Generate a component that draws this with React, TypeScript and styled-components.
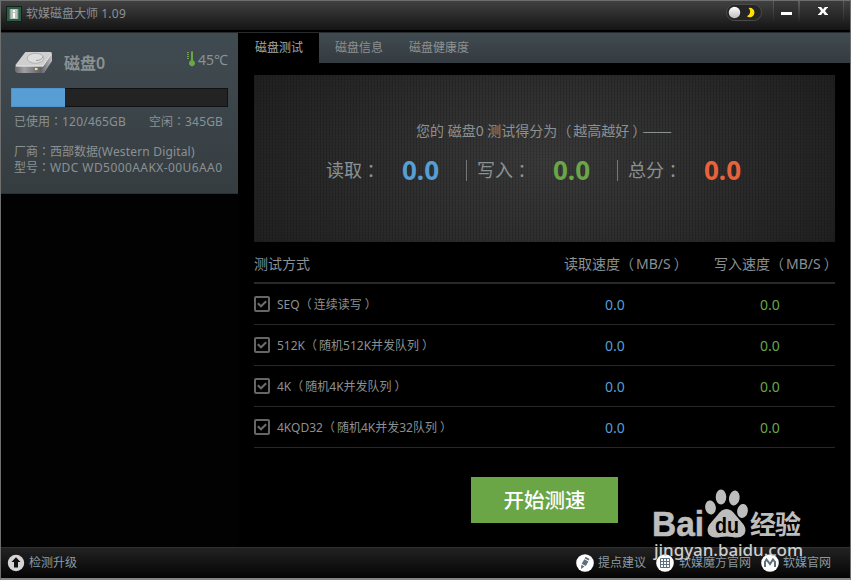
import React from "react";
import styled, { createGlobalStyle } from "styled-components";

const Global = createGlobalStyle`
  * { box-sizing: border-box; }
  body { margin: 0; background: #000; font-family: "Noto Sans", "Noto Sans CJK SC", sans-serif; }
`;

const Window = styled.div`
  width: 851px;
  height: 580px;
  display: flex;
  flex-direction: column;
  position: relative;
  overflow: hidden;
  background: #000;
  border: 1px solid #6e6e6e;
  border-bottom: 2px solid #858585;
  color: #8b9193;
  font-size: 12px;
  line-height: 16px;
  white-space: nowrap;
`;

/* Full-width colon, centred in its cell */
const ColonGlyph = styled.span`
  font-family: "Noto Sans CJK JP", sans-serif;
`;
const Colon = () => <ColonGlyph>：</ColonGlyph>;

/* Full-width brackets, pulled towards the centre of their cells */
const Bracket = styled.span<{ $open: boolean }>`
  margin: ${(p) => (p.$open ? "0 2px 0 0" : "0 -3px 0 3px")};
`;
const Bracketed = ({ text }: { text: string }) => (
  <span>
    {text.split(/([（）])/).map((part, i) =>
      part === "（" || part === "）" ? (
        <Bracket key={i} $open={part === "（"}>{part}</Bracket>
      ) : (
        part
      )
    )}
  </span>
);

const TitleBar = styled.header`
  height: 32px;
  flex: none;
  display: flex;
  align-items: flex-start;
  background: linear-gradient(#414141, #141414 29px, #000 29px, #000 31px, #272b2d 31px);
`;
const AppIcon = styled.svg`
  margin: 5px 0 0 5px;
  flex: none;
`;
const AppTitle = styled.h1`
  margin: 4px 0 0 4px;
  flex: 1;
  font-size: 12px;
  font-weight: 400;
  line-height: 18px;
`;
const ThemeToggle = styled.div`
  width: 36px;
  height: 17px;
  margin: 3px 11px 0 0;
  border: 1px solid #4b4b4b;
  border-radius: 9px;
  background: #242424;
  svg { display: block; }
`;
const WindowButton = styled.button<{ $w: number }>`
  width: ${(p) => p.$w}px;
  height: 20px;
  padding: 0;
  border: 1px solid;
  border-width: 0 1px;
  border-image: linear-gradient(#636363, #252525) 1;
  background: linear-gradient(#3b3b3b, #222);
  svg { display: block; }
`;

const Body = styled.div`
  flex: 1;
  min-height: 0;
  display: flex;
`;
const Sidebar = styled.aside`
  width: 237px;
  flex: none;
  background: #020202;
`;
const DiskCard = styled.section`
  height: 161px;
  padding: 15px 10px 0;
  background: linear-gradient(#404b51, #363d41);
  border-bottom: 1px solid #2b3033;
`;
const DiskHead = styled.div`
  height: 40px;
  display: flex;
`;
const DriveIcon = styled.svg`
  margin: 3px 0 0 4px;
`;
const DiskName = styled.h2`
  margin: 3px 0 0 12px;
  flex: 1;
  font-size: 16px;
  font-weight: 600;
  line-height: 24px;
`;
const Temperature = styled.div`
  display: flex;
  gap: 3px;
  font-size: 14px;
  line-height: 24px;
  svg { margin-top: 3px; }
`;
const Usage = styled.div`
  height: 19px;
  border: 1px solid #101112;
  background: #232323;
`;
const UsageFill = styled.div`
  width: 54px;
  height: 19px;
  margin: -1px 0 0 -1px;
  background: #589dd4;
  border: 1px solid #4e94cb;
  border-right: 0;
`;
const UsageText = styled.div`
  display: flex;
  justify-content: space-between;
  margin: 6px 5px 13px 3px;
`;
const DiskInfo = styled.div`
  margin-left: 3px;
  & + & { margin-top: -1px; }
`;
const Spaced = styled.span<{ $s: number }>`
  letter-spacing: ${(p) => p.$s}px;
`;

const Main = styled.main`
  flex: 1;
  display: flex;
  flex-direction: column;
`;
const Tabs = styled.nav`
  height: 30px;
  display: flex;
  background: linear-gradient(#404b51, #343b40);
`;
const Tab = styled.div<{ $active?: boolean }>`
  padding: 0 ${(p) => (p.$active ? "16px 0 17px" : "13px")};
  margin-right: ${(p) => (p.$active ? 3 : 0)}px;
  line-height: 30px;
  background: ${(p) => (p.$active ? "#000" : "transparent")};
  color: ${(p) => (p.$active ? "#a3aaad" : "#8b9193")};
`;
const Content = styled.div`
  padding: 12px 14px 0 16px;
`;
const ScorePanel = styled.section`
  height: 167px;
  width: 581px;
  padding-top: 46px;
  background:
    repeating-linear-gradient(90deg, rgba(0, 0, 0, 0.15) 0 1px, transparent 1px 3px),
    repeating-linear-gradient(0deg, rgba(0, 0, 0, 0.05) 0 1px, transparent 1px 3px),
    radial-gradient(ellipse 330px 170px at 50% 52%, #3a3a3a, #202020);
`;
const ScoreTitle = styled.div`
  height: 20px;
  margin-left: 162px;
  font-size: 14px;
  line-height: 20px;
`;
const Dash = styled.span`
  font-family: "Liberation Sans", sans-serif;
  line-height: 0;
`;
const Scores = styled.div`
  display: grid;
  grid-template-columns: 141px 151px 130px;
  margin: 14px 0 0 72px;
`;
const Score = styled.div`
  display: flex;
  align-items: center;
  height: 30px;
  font-size: 18px;
`;
const ScoreValue = styled.strong<{ $color: string }>`
  margin-left: 22px;
  color: ${(p) => p.$color};
  font-size: 26px;
  line-height: 30px;
  font-weight: 700;
`;
const Divider = styled.i`
  width: 1px;
  height: 21px;
  margin-right: 10px;
  margin-left: -1px;
  background: #777;
`;

const Row = styled.div<{ $head?: boolean }>`
  width: 581px;
  height: ${(p) => (p.$head ? 42 : 41)}px;
  padding-top: ${(p) => (p.$head ? 4 : 1)}px;
  display: grid;
  grid-template-columns: 310px 150px 121px;
  align-items: center;
  border-bottom: ${(p) => (p.$head ? "2px solid #292929" : "1px solid #272727")};
  font-size: ${(p) => (p.$head ? 14 : 12)}px;
`;
const Method = styled.label`
  display: flex;
  align-items: center;
  gap: 7px;
  svg { margin-top: -2px; }
`;
const Speed = styled.span<{ $color: string; $indent: number }>`
  padding-left: ${(p) => p.$indent}px;
  color: ${(p) => p.$color};
  font-size: 14px;
`;
const StartButton = styled.button`
  display: block;
  width: 147px;
  height: 46px;
  margin: 29px 0 0 217px;
  padding: 0 0 2px;
  border: 0;
  background: #6aa546;
  color: #fff;
  font: 500 20.5px/44px "Noto Sans CJK SC", sans-serif;
`;

const Footer = styled.footer`
  height: 31px;
  flex: none;
  display: flex;
  align-items: center;
  padding: 0 19px 0 6px;
  border-top: 1px solid #303030;
  background: linear-gradient(#222, #040404);
`;
const FooterLink = styled.a<{ $push?: boolean; $gap?: number }>`
  display: flex;
  align-items: center;
  gap: 4px;
  margin-right: ${(p) => (p.$push ? "auto" : `${p.$gap ?? 0}px`)};
  color: #8b9aa2;
`;

/* Watermark lies over the button area and the footer */
const Watermark = styled.div`
  position: absolute;
  left: 651px;
  top: 486px;
  width: 156px;
  height: 76px;
`;
const WatermarkArt = styled.svg`
  display: block;
  overflow: visible;
`;

const CheckBox = () => (
  <svg width="16" height="16" viewBox="0 0 16 16" fill="none">
    <rect x="1" y="1" width="14" height="14" rx="1" stroke="#666" strokeWidth="2" />
    <path d="M3.8 7.3 7 10.3 12.2 5.2" stroke="#6c6c6c" strokeWidth="2" />
  </svg>
);

const rows: [string, number][] = [
  ["SEQ（连续读写）", 0],
  ["512K（随机512K并发队列）", 0],
  ["4K（随机4K并发队列）", 0],
  ["4KQD32（随机4K并发32队列）", 0],
];

export default function App() {
  return (
    <Window>
      <Global />
      <TitleBar>
        <AppIcon width="16" height="16" viewBox="0 0 16 16">
          <rect width="16" height="16" fill="#112219" />
          <rect x="1" y="1" width="14" height="14" fill="#2d5a45" />
          <path d="M4 3h8v10H4z" fill="#b9c1bd" />
          <path d="M7 4h2v2H7zM7 7h2v5H7z" fill="#fff" />
          <path d="M4 3v10M12 3v10" stroke="#718d80" />
        </AppIcon>
        <AppTitle>软媒磁盘大师 <Spaced $s={0.3}>1.09</Spaced></AppTitle>
        <ThemeToggle>
          <svg width="34" height="15" viewBox="0 0 34 15">
            <defs>
              <linearGradient id="knob" x2="0" y2="1">
                <stop stopColor="#fff" />
                <stop offset="1" stopColor="#bcbcbc" />
              </linearGradient>
            </defs>
            <circle cx="7.5" cy="7.5" r="5.7" fill="url(#knob)" />
            <path d="M21.5 3a4.7 4.7 0 1 1-1.6 8.3A5 5 0 0 0 21.5 3Z" fill="#ffe000" />
          </svg>
        </ThemeToggle>
        <WindowButton $w={26} aria-label="最小化">
          <svg width="24" height="20"><path d="M7 11h11v3H7z" fill="#fff" /></svg>
        </WindowButton>
        <WindowButton $w={45} aria-label="关闭">
          <svg width="43" height="20"><path d="M18 6h3.2l1.8 2.4L24.8 6H28v1h-.8L25 10l2.4 3h.6v1h-3.3L23 11.6 21.2 14H18v-1h.8l2.3-3-2.3-3H18z" fill="#fff" /></svg>
        </WindowButton>
        <svg width="6" height="20" />
      </TitleBar>

      <Body>
        <Sidebar>
          <DiskCard>
            <DiskHead>
              <DriveIcon width="37" height="23" viewBox="0 0 37 23">
                <defs>
                  <linearGradient id="side" x2="1">
                    <stop stopColor="#68686d" />
                    <stop offset=".25" stopColor="#a0a0a4" />
                    <stop offset=".7" stopColor="#606065" />
                    <stop offset="1" stopColor="#c0c0c2" />
                  </linearGradient>
                </defs>
                <path d="M10.5 1H35q2 0 2 2v7L29 22H2l-2-2v-6Z" fill="url(#side)" />
                <path d="M10.5 1H35q2 0 1.4 2L28 15.5H2q-2-.5-1-2Z" fill="#cfcfcf" />
                <ellipse cx="20.5" cy="7.3" rx="8.3" ry="5" fill="#dedede" stroke="#b0b0b0" />
                <path d="M21 9.5q6 0 7-4" fill="none" stroke="#999" />
                <path d="M1 15h27L36 3.5" fill="none" stroke="#eee" strokeWidth=".8" />
                <path d="M20 17h2.5v2H20z" fill="#f0e878" />
              </DriveIcon>
              <DiskName>磁盘0</DiskName>
              <Temperature>
                <svg width="8" height="16" viewBox="0 0 8 16">
                  <path d="M0 1.5h2M0 3.5h2M0 5.5h2M0 7.5h2" stroke="#6aa546" />
                  <path d="M4 1q1-2 2 0v8.3a3 3 0 1 1-2 0Z" fill="#6aa546" />
                </svg>
                <span>45℃</span>
              </Temperature>
            </DiskHead>
            <Usage><UsageFill /></Usage>
            <UsageText>
              <span>已使用<Colon /><Spaced $s={0.2}>120/465GB</Spaced></span>
              <span>空闲<Colon /><Spaced $s={0.15}>345GB</Spaced></span>
            </UsageText>
            <DiskInfo>厂商<Colon />西部数据<Spaced $s={0.17}>(Western Digital)</Spaced></DiskInfo>
            <DiskInfo>型号<Colon /><Spaced $s={0.42}>WDC WD5000AAKX-00U6AA0</Spaced></DiskInfo>
          </DiskCard>
        </Sidebar>

        <Main>
          <Tabs>
            <Tab $active>磁盘测试</Tab>
            <Tab>磁盘信息</Tab>
            <Tab>磁盘健康度</Tab>
          </Tabs>
          <Content>
            <ScorePanel>
              <ScoreTitle><Bracketed text="您的 磁盘0 测试得分为（越高越好）" /><Dash>——</Dash></ScoreTitle>
              <Scores>
                <Score>读取<Colon /><ScoreValue $color="#589dd4">0.0</ScoreValue></Score>
                <Score><Divider />写入<Colon /><ScoreValue $color="#6aa546">0.0</ScoreValue></Score>
                <Score><Divider />总分<Colon /><ScoreValue $color="#e8623c">0.0</ScoreValue></Score>
              </Scores>
            </ScorePanel>
            <Row $head>
              <span>测试方式</span>
              <Bracketed text="读取速度（MB/S）" />
              <Bracketed text="写入速度（MB/S）" />
            </Row>
            {rows.map(([name, value]) => (
              <Row key={name}>
                <Method><CheckBox /><Bracketed text={name} /></Method>
                <Speed $color="#589dd4" $indent={41}>{value.toFixed(1)}</Speed>
                <Speed $color="#6aa546" $indent={46}>{value.toFixed(1)}</Speed>
              </Row>
            ))}
            <StartButton>开始测速</StartButton>
          </Content>
        </Main>
      </Body>

      <Footer>
        <FooterLink $push>
          <svg width="18" height="18" viewBox="0 0 18 18">
            <circle cx="9" cy="9" r="8.2" fill="#d5d5d5" />
            <path d="M9 3.2 13.5 8H11v5.5H7V8H4.5Z" fill="#111" />
          </svg>
          检测升级
        </FooterLink>
        <FooterLink $gap={10}>
          <svg width="18" height="18" viewBox="0 0 18 18">
            <circle cx="9" cy="9" r="8.8" fill="#fff" />
            <path d="m9.6 2.8 3.9 2.1-.7 1.7L8.7 4.4ZM8.3 5.200l4.1 2.3-2.6 4.5-4.1-2.3ZM5.3 10.8l3.2 1.8L5 15Z" fill="#5c707d" />
          </svg>
          提点建议
        </FooterLink>
        <FooterLink $gap={10}>
          <svg width="19" height="18" viewBox="0 0 19 18">
            <circle cx="9" cy="9" r="8.8" fill="#fff" />
            <path d="M4.5 4.5h9v9h-9zM7.5 4.5v9M10.5 4.5v9M4.5 7.5h9M4.5 10.5h9" fill="none" stroke="#5c707d" />
          </svg>
          软媒魔方官网
        </FooterLink>
        <FooterLink>
          <svg width="18" height="18" viewBox="0 0 18 18">
            <circle cx="9" cy="9" r="8.8" fill="#fff" />
            <path d="M4 13V8l1.5-2.5L9 10l3-4.5L14 8v5" fill="none" stroke="#5c707d" strokeWidth="2" />
          </svg>
          软媒官网
        </FooterLink>
      </Footer>

      <Watermark>
        <WatermarkArt width="156" height="76" viewBox="0 0 156 76" fill="#bdbdbd">
          <text x="0" y="49" fontFamily="Liberation Sans" fontWeight="700" fontSize="35" textLength="52" lengthAdjust="spacingAndGlyphs" stroke="#bdbdbd" strokeWidth=".6">Bai</text>
          <ellipse cx="58.5" cy="20.5" rx="5.3" ry="7" transform="rotate(-10 58.5 20.5)" />
          <ellipse cx="69" cy="10" rx="5.3" ry="7.5" />
          <ellipse cx="82.3" cy="11" rx="5.3" ry="7.5" transform="rotate(10 82.3 11)" />
          <ellipse cx="90.5" cy="24" rx="5.3" ry="7" transform="rotate(10 90.5 24)" />
          <path d="M74.5 22q5 0 9 6l6 7q6 6 3 12-4 5-12 3-6-1-12 0-8 2-12-3-3-6 3-12l6-7q4-6 9-6Z" />
          <text x="63" y="46" fill="#000" fontFamily="Liberation Sans" fontWeight="700" fontSize="22" textLength="24" lengthAdjust="spacingAndGlyphs">du</text>
          <text x="98" y="47" fontFamily="Noto Sans CJK SC" fontWeight="700" fontSize="26" textLength="51">经验</text>
          <text x="2" y="69" fontFamily="Noto Sans" fontWeight="500" fontSize="17" fill="#cfcfcf" textLength="149">jingyan.baidu.com</text>
        </WatermarkArt>
      </Watermark>
    </Window>
  );
}
